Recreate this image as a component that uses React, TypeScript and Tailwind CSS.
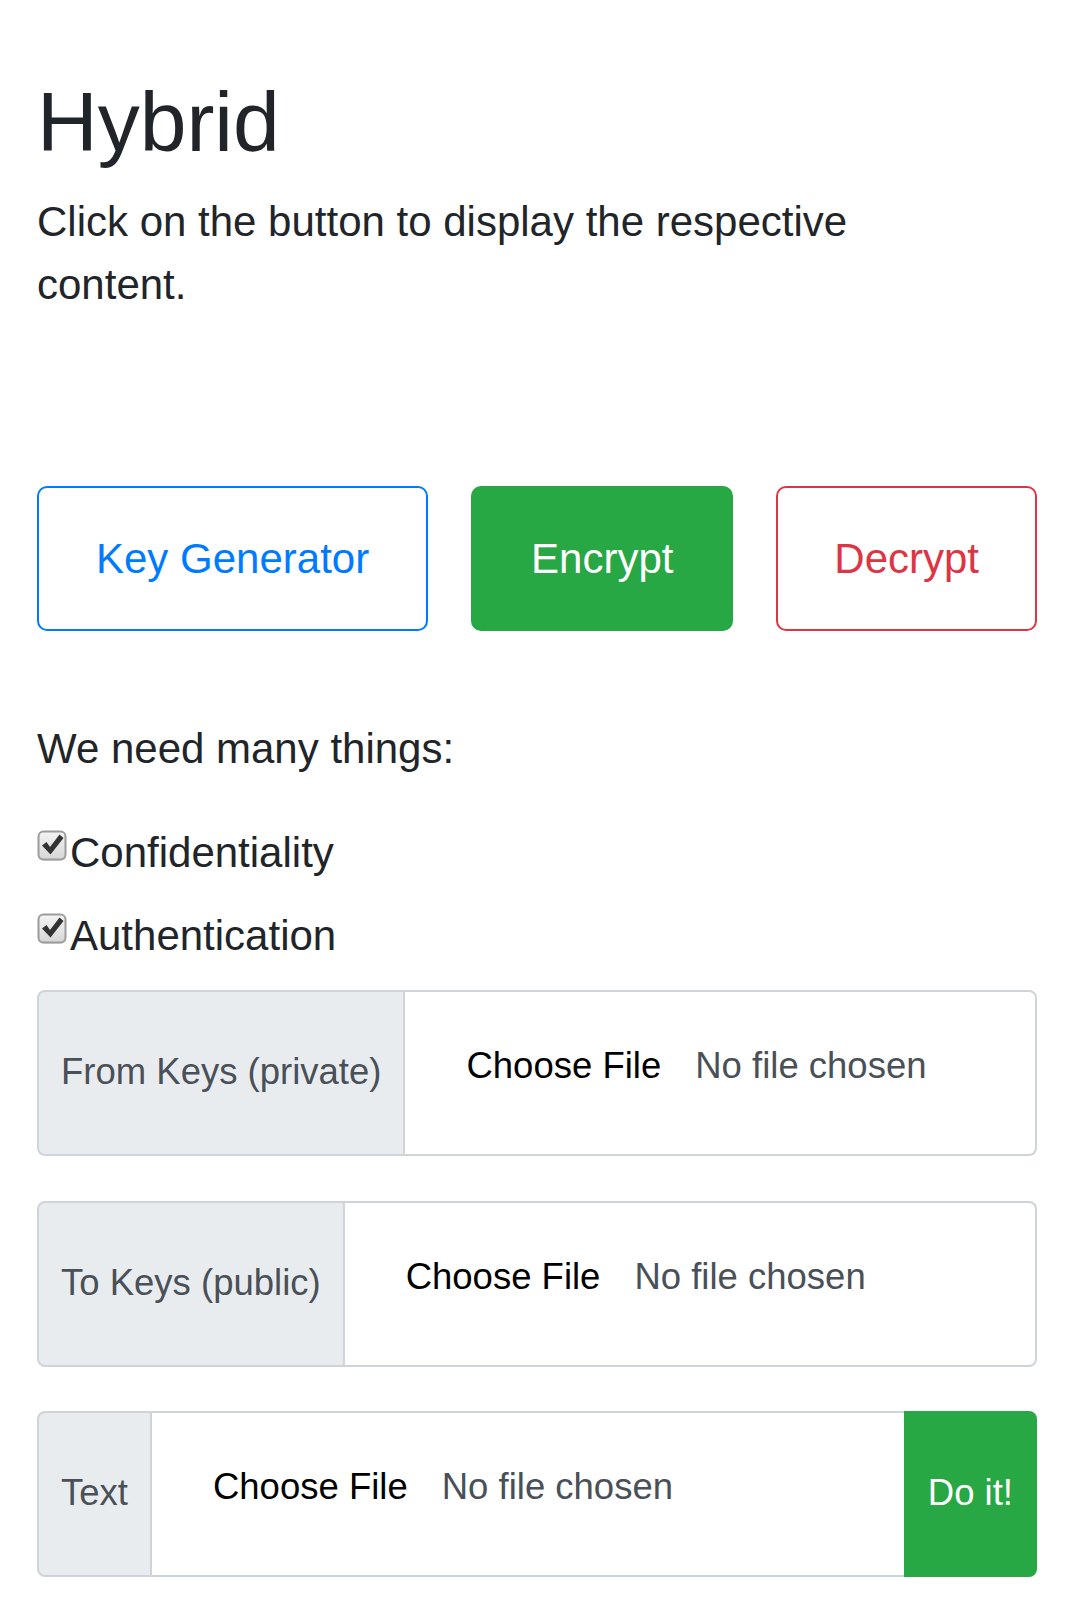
import React from "react";

const font = { fontFamily: '"Liberation Sans", Helvetica, Arial, sans-serif' };

function Check() {
  return (
    <svg width="31" height="33" viewBox="0 0 31 33" className="shrink-0 mt-[9px]">
      <defs>
        <linearGradient id="cbg" x1="0" y1="0" x2="0" y2="1">
          <stop offset="0" stopColor="#f4f4f4" />
          <stop offset="1" stopColor="#d6d6d6" />
        </linearGradient>
      </defs>
      <rect x="1" y="2" width="28" height="29" rx="5" fill="#e6e6e6" />
      <rect x="1.5" y="1.5" width="27" height="28" rx="5" fill="url(#cbg)" stroke="#9c9c9c" strokeWidth="2" />
      <path d="M5 15.5 L9.5 12 L13 17 L22.5 4.5 L26.5 8 L13.5 24.5 Z" fill="#333" />
    </svg>
  );
}

function FileInput() {
  return (
    <div className="flex items-start pt-[47px] pl-[61px] text-[36.5px] leading-[54px] whitespace-nowrap">
      <span className="text-black">Choose File</span>
      <span className="ml-[34px] text-[#495057]">No file chosen</span>
    </div>
  );
}

export default function App() {
  return (
    <div className="min-h-screen bg-white text-[#212529] pl-[37px] pr-[39px] pt-[72px]" style={font}>
      <h1 className="text-[84px] leading-[100.8px] font-normal mb-[17px]">Hybrid</h1>
      <p className="text-[42px] leading-[63px] max-w-[900px]">
        Click on the button to display the respective content.
      </p>

      <div className="mt-[170px] flex justify-between">
        <button className="h-[145px] px-[57px] border-2 border-[#007bff] text-[#007bff] bg-white rounded-[10px] text-[42px] leading-[63px]">
          Key Generator
        </button>
        <button className="h-[145px] px-[58px] border-2 border-[#28a745] bg-[#28a745] text-white rounded-[10px] text-[42px] leading-[63px]">
          Encrypt
        </button>
        <button className="h-[145px] px-[56px] border-2 border-[#dc3545] text-[#dc3545] bg-white rounded-[10px] text-[42px] leading-[63px]">
          Decrypt
        </button>
      </div>

      <p className="mt-[86px] text-[42px] leading-[63px]">We need many things:</p>

      <div className="mt-[41px] flex items-start text-[42px] leading-[63px]">
        <Check />
        <span className="ml-[2px]">Confidentiality</span>
      </div>
      <div className="mt-[20px] flex items-start text-[42px] leading-[63px]">
        <Check />
        <span className="ml-[2px]">Authentication</span>
      </div>

      <div className="mt-[23px] flex h-[166px]">
        <div className="flex items-center px-[22px] bg-[#e9ecef] border-2 border-[#ced4da] rounded-l-[8px] text-[36.5px] text-[#495057] whitespace-nowrap">
          From Keys (private)
        </div>
        <div className="flex-1 bg-white border-y-2 border-r-2 border-[#ced4da] rounded-r-[8px]">
          <FileInput />
        </div>
      </div>

      <div className="mt-[45px] flex h-[166px]">
        <div className="flex items-center px-[22px] bg-[#e9ecef] border-2 border-[#ced4da] rounded-l-[8px] text-[36.5px] text-[#495057] whitespace-nowrap">
          To Keys (public)
        </div>
        <div className="flex-1 bg-white border-y-2 border-r-2 border-[#ced4da] rounded-r-[8px]">
          <FileInput />
        </div>
      </div>

      <div className="mt-[44px] flex h-[166px]">
        <div className="flex items-center px-[22px] bg-[#e9ecef] border-2 border-[#ced4da] rounded-l-[8px] text-[36.5px] text-[#495057] whitespace-nowrap">
          Text
        </div>
        <div className="flex-1 bg-white border-y-2 border-[#ced4da]">
          <FileInput />
        </div>
        <button className="flex items-center px-[24px] bg-[#28a745] text-white rounded-r-[8px] text-[36.5px]">
          Do it!
        </button>
      </div>
    </div>
  );
}
